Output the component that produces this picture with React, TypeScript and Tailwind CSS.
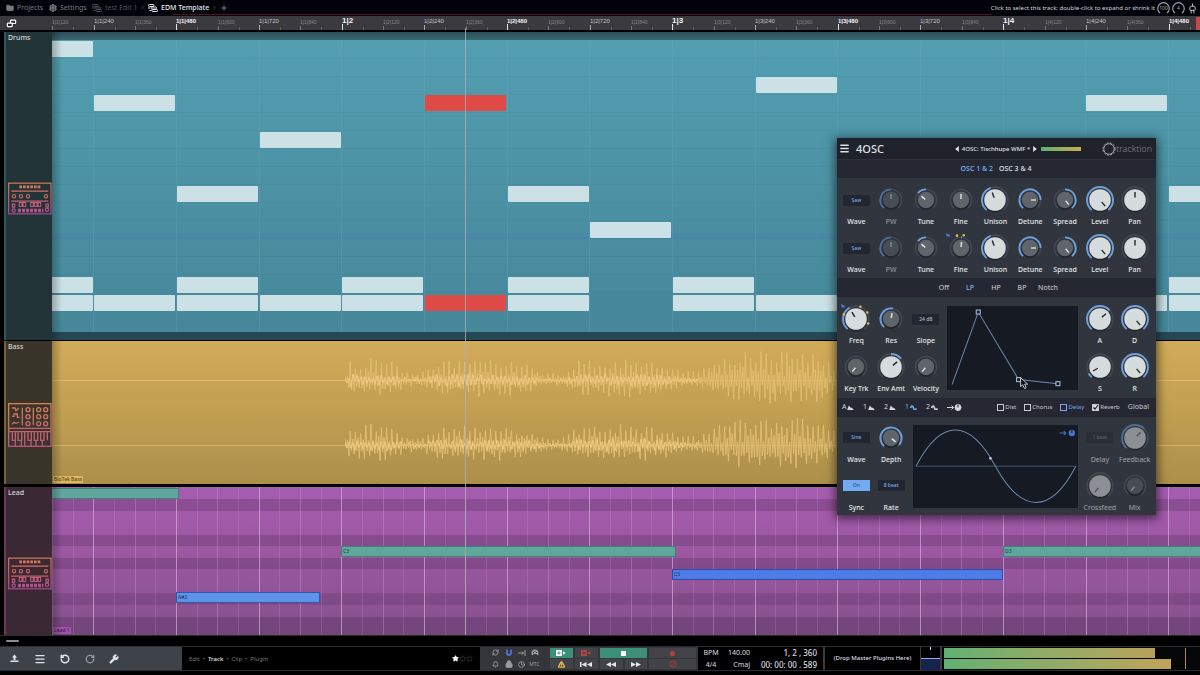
import React from "react";
import {
  Folder,
  Settings,
  Plus,
  Plug,
  Menu,
  RotateCcw,
  RotateCw,
  Wrench,
  Lock,
  Star,
  RefreshCw,
  Bell,
  Clock,
  TriangleAlert,
} from "lucide-react";

/* ------------------------------------------------------------------ */
/* Timeline geometry: the canvas starts at beat position 1|1|120        */
/* ------------------------------------------------------------------ */
const SIXTEENTH = 82.68;
const slotX = (slot: number) => Math.round(slot * SIXTEENTH - 40.4);

type DrumHit = { slot: number; lane: number; hot?: boolean };

const drumHits: DrumHit[] = [
  { slot: 0, lane: 0 },
  { slot: 1, lane: 3 },
  { slot: 3, lane: 5 },
  { slot: 5, lane: 3, hot: true },
  { slot: 9, lane: 2 },
  { slot: 13, lane: 3 },
  { slot: 2, lane: 8 },
  { slot: 6, lane: 8 },
  { slot: 14, lane: 8 },
  { slot: 7, lane: 10 },
  ...[0, 2, 4, 6, 8, 10, 12, 14].map((slot) => ({ slot, lane: 13 })),
  ...[0, 1, 2, 3, 4, 6, 8, 9, 10, 11, 12, 13, 14].map((slot) => ({ slot, lane: 14 })),
  { slot: 5, lane: 14, hot: true },
];

const leadLanes = [
  "h-3 bg-transparent",
  "h-3 bg-[#2b1a35]/20",
  "h-6 bg-transparent",
  "h-[11px] bg-[#2b1a35]/20",
  "h-3 bg-transparent",
  "h-[11px] bg-[#2b1a35]/20",
  "h-6 bg-transparent",
  "h-3 bg-[#2b1a35]/15",
  "h-3 bg-transparent",
  "flex-1 bg-[#2b1a35]/20",
];

const leadNotes = [
  { x: -2, w: 129, y: 1, name: "", tone: "bg-[#5fa69b] border-[#3f7f7c]" },
  { x: 289, w: 335, y: 59, name: "C3", tone: "bg-[#5fa69b] border-[#3f7f7c]" },
  { x: 951, w: 335, y: 59, name: "D3", tone: "bg-[#5fa69b] border-[#3f7f7c]" },
  { x: 620, w: 331, y: 82, name: "C3", tone: "bg-[#4f7be6] border-[#2f4aa8]" },
  { x: 124, w: 144, y: 105, name: "A#2", tone: "bg-[#5e93ec] border-[#3257a4]" },
];

const rulerMarks = Array.from({ length: 28 }, (_, i) => {
  const tick = (i + 1) * 120;
  const beat = Math.floor(tick / 960) + 1;
  const rest = tick % 960;
  return {
    text: rest === 0 ? `1|${beat}` : `1|${beat}|${rest}`,
    level: rest === 0 ? 3 : rest % 480 === 0 ? 2 : rest % 240 === 0 ? 1 : 0,
    x: Math.round(((i + 1) * SIXTEENTH) / 2 - 41),
  };
});

const markText = [
  "text-[5px] leading-3 text-[#85848a]",
  "text-[6px] leading-[11px] text-[#c3c3c8]",
  "text-[6px] font-bold leading-[10px] text-[#f4f4f6]",
  "text-[8px] font-bold leading-[9px] text-[#f4f4f6]",
];
const markTick = [
  "h-1 bg-[#77767c]",
  "h-[5px] bg-[#a9a9ad]",
  "h-[6px] bg-[#e4e4e6]",
  "h-[6px] bg-[#e4e4e6]",
];

function TopBar() {
  return (
    <header className="flex h-4 items-center bg-[#02020a] pl-[6px] pr-[2px] text-[7px] leading-4 text-[#777981]">
      <nav className="flex items-center">
        <a href="#projects" className="flex w-[43px] items-center gap-[3px]">
          <Folder className="size-2" fill="currentColor" /> Projects
        </a>
        <a href="#settings" className="flex w-[43px] items-center gap-[3px]">
          <Settings className="size-2" strokeWidth={4} /> Settings
        </a>
        <a href="#test-edit" className="flex w-14 items-center gap-[3px] text-[#4c4e56]">
          <TabGlyph /> test Edit 1 <span className="text-[#34353c]">×</span>
        </a>
        <a href="#edm" className="flex items-center gap-[3px] font-medium text-[#e8e9ec]">
          <TabGlyph /> EDM Template <span className="font-normal text-[#34353c]">×</span>
        </a>
        <button type="button" aria-label="New tab" className="ml-1">
          <Plus className="size-2" strokeWidth={3} />
        </button>
      </nav>
      <div className="ml-auto flex items-center gap-[2px]">
        <span className="text-[6px] leading-4 text-[#d3d4d8]">
          Click to select this track; double-click to expand or shrink it
        </span>
        <Dial text="100" />
        <Dial text="4" />
        <Plug className="size-[11px] rotate-180 text-[#c9cace]" />
      </div>
    </header>
  );
}

function TabGlyph() {
  return (
    <svg viewBox="0 0 20 16" className="h-2 w-[10px]" fill="none" stroke="currentColor" strokeWidth="2">
      <rect x="1" y="1" width="11" height="4" rx="1.500" />
      <rect x="6" y="6" width="11" height="4" rx="1.500" />
      <rect x="8" y="11" width="11" height="4" rx="1.500" />
      <path d="M0 8h4M3 13h4" />
    </svg>
  );
}

function Dial({ text }: { text: string }) {
  return (
    <span className="relative flex size-[13px] items-center justify-center text-[5px] leading-none text-[#a5a6ac]">
      <svg viewBox="0 0 26 26" className="absolute inset-0 size-full" fill="none" stroke="#9a9ba2" strokeWidth="2.4">
        <path d="M6 22A11.5 11.5 0 1 1 20 22" />
      </svg>
      {text}
    </span>
  );
}

function Ruler() {
  return (
    <div className="relative flex h-4 border-b-2 border-black bg-[#3b3a3f] pl-1">
      <div className="absolute left-[173px] right-[208px] top-[-2px] h-px bg-[#4d1718]" />
      <div className="flex w-12 flex-none items-center bg-[#38373c] pl-[2px]">
        <svg viewBox="0 0 30 26" className="h-[9px] w-[11px]" fill="none" stroke="#fff" strokeWidth="3.4">
          <rect x="12" y="3" width="15" height="10" rx="2" />
          <rect x="3" y="12" width="14" height="10" rx="2" fill="#222" />
        </svg>
      </div>
      <div className="relative flex-1 overflow-hidden font-['Liberation_Sans',sans-serif]">
        {rulerMarks.map((m) => (
          <div
            key={m.text}
            className={`absolute inset-y-0 whitespace-nowrap ${markText[m.level]}`}
            style={{ left: m.x }}
          >
            {m.text}
            <span className={`absolute bottom-0 left-0 w-px ${markTick[m.level]}`} />
            <span className="absolute bottom-0 left-[21px] h-[3px] w-px bg-[#5d5c62]" />
          </div>
        ))}
        <div className="absolute right-0 top-px h-[13px] w-1 bg-[#c64a45]" />
      </div>
    </div>
  );
}

function DrumMachineIcon({ id }: { id: string }) {
  return (
    <svg viewBox="0 0 132 98" className="block h-[33px] w-11" fill="none" stroke={`url(#${id})`} strokeWidth="3.4">
      <defs>
        <linearGradient id={id} x1="0" y1="0" x2="0" y2="98" gradientUnits="userSpaceOnUse">
          <stop offset="0" stopColor="#dc7f52" />
          <stop offset="0.45" stopColor="#cd6662" />
          <stop offset="1" stopColor="#ab4a9a" />
        </linearGradient>
      </defs>
      <rect x="2" y="3" width="127" height="92" />
      <path d="M34 14h66" strokeWidth="8" strokeDasharray="8 3" />
      <path d="M10 27h111M10 57h111" strokeWidth="4" />
      <circle cx="18" cy="42" r="5" />
      <circle cx="39" cy="42" r="5" />
      <circle cx="60" cy="42" r="5" />
      <circle cx="114" cy="42" r="5" />
      <path d="M34 61h8v12h-8zM45 61h8v12h-8zM68 61h8v12h-8zM79 61h8v12h-8zM90 61h8v12h-8z" />
      <path d="M13 66h7v9h-7zM114 66h7v9h-7z" />
      <path d="M30 85h76" strokeWidth="11" strokeDasharray="9 3" />
      <circle cx="17" cy="85" r="5" />
      <circle cx="117" cy="83" r="5" />
    </svg>
  );
}

function SynthIcon() {
  return (
    <svg viewBox="0 0 132 132" className="block size-11" fill="none" stroke="url(#synth)" strokeWidth="4">
      <defs>
        <linearGradient id="synth" x1="0" y1="0" x2="0" y2="132" gradientUnits="userSpaceOnUse">
          <stop offset="0" stopColor="#d87e58" />
          <stop offset="1" stopColor="#ba527e" />
        </linearGradient>
      </defs>
      <rect x="2" y="2" width="127" height="128" />
      <path d="M2 76h127M2 86h127" />
      <path d="M12 15h9l3 8 9-8M12 40h6v-7h10v10h7M12 64l6-6 6 3 10-4M43 14v53M76 14v53" />
      {[20, 41, 62].map((y) =>
        [60, 92, 113].map((x) => <circle key={`${x}-${y}`} cx={x} cy={y} r="6" />),
      )}
      <path d="M13 88v24h9v-24M30 88v24h11v-24M22 112v18M50 88v42M60 88v24h10v-24M79 88v24h10v-24M69 112v18M98 88v24h10v-24M84 112v18M103 112v18M118 88v24M40 112v18" />
    </svg>
  );
}

type TrackProps = {
  name: string;
  head: string;
  edge: string;
  icon: React.ReactNode;
  iconPad: string;
  children: React.ReactNode;
  grow: string;
};

function Track({ name, head, edge, icon, iconPad, children, grow }: TrackProps) {
  return (
    <section className={`flex ${grow} pl-1`}>
      <div className={`w-[2px] flex-none ${edge}`} />
      <div className={`flex w-[46px] flex-none flex-col pl-[2px] ${head}`}>
        <h2 className="h-[11px] text-[7px] font-medium leading-[11px] text-[#d3d7d9]">{name}</h2>
        <div className={iconPad}>{icon}</div>
      </div>
      <div className="relative flex-1 overflow-hidden">
        {children}
        <div className="absolute inset-y-0 left-0 w-[10px] bg-gradient-to-r from-black/25 to-transparent" />
      </div>
    </section>
  );
}

function DrumClip() {
  return (
    <div className="flex h-full flex-col bg-[#2b4c57]">
      <div className="h-2 bg-gradient-to-b from-[#2c4e58] to-[#3a6872]" />
      <div className="relative h-[292px] bg-gradient-to-b from-[#539eb1] via-[#4c92a4] to-[#46879a]">
        <div className="absolute inset-x-0 top-[192px] h-[10px] bg-gradient-to-b from-transparent via-[#4a83ab]/70 to-transparent" />
        {Array.from({ length: 14 }, (_, i) => (
          <div
            key={`lane-${i}`}
            className="absolute inset-x-0 h-px bg-[#2f6b80]/10"
            style={{ top: 18 + i * 18 }}
          />
        ))}
        {Array.from({ length: 14 }, (_, i) => (
          <div
            key={`bar-${i}`}
            className="absolute inset-y-0 w-px bg-[#7fc0cf]/15"
            style={{ left: slotX(i + 1) - 1 }}
          />
        ))}
        {drumHits.map((n) => (
          <div
            key={`${n.slot}-${n.lane}`}
            className={
              n.hot
                ? "absolute h-4 w-[81px] rounded-[1px] bg-[#df4c48]"
                : "absolute h-4 w-[81px] rounded-[1px] bg-[#cbe1e6]"
            }
            style={{ left: slotX(n.slot), top: Math.round(1 + n.lane * 18.12) }}
          />
        ))}
      </div>
      <div className="h-2 bg-[#254854]" />
    </div>
  );
}

/* Repeatable noise so the wave keeps one shape between renders. */
function noise(n: number) {
  const v = Math.sin(n * 127.1 + 11.7) * 43758.5453;
  return v - Math.floor(v);
}

const envelope: [number, number][] = [
  [0, 6],
  [4, 24],
  [12, 15],
  [25, 20],
  [45, 18],
  [60, 9],
  [75, 8],
  [95, 18],
  [125, 19],
  [165, 17],
  [185, 14],
  [200, 6],
  [218, 7],
  [235, 18],
  [280, 19],
  [310, 17],
  [335, 9],
  [354, 8],
  [375, 21],
  [400, 26],
  [440, 27],
  [470, 25],
  [491, 12],
];

function envAt(x: number) {
  for (let i = 1; i < envelope.length; i++) {
    const [x1, y1] = envelope[i];
    const [x0, y0] = envelope[i - 1];
    if (x <= x1) return y0 + ((y1 - y0) * (x - x0)) / (x1 - x0);
  }
  return 12;
}

function spikes(seed: number, mid: number) {
  let d = "";
  let i = 0;
  for (let x = 0; x < 491; x += 2.6) {
    const e = envAt(x);
    const main = i % 2 === 0;
    const up = e * (main ? 0.6 + 0.5 * noise(i + seed) : 0.1 + 0.4 * noise(i + seed));
    const down = e * (main ? 0.2 + 0.3 * noise(i + seed + 50) : 0.4 + 0.5 * noise(i + seed + 90));
    d += `${i === 0 ? "M" : "L"}${x.toFixed(1)} ${(mid - up).toFixed(1)}L${(x + 1.3).toFixed(1)} ${(mid + down).toFixed(1)}`;
    i++;
  }
  return d;
}

function body(seed: number, mid: number) {
  let d = "";
  for (let i = 0; i < 178; i++) {
    const x = i * 2;
    const e = envAt(x) * 0.3 * (0.2 + noise(i * 3 + seed));
    d += `${i === 0 ? "M" : "L"}${x} ${(mid + (i % 2 ? e : -e)).toFixed(1)}`;
  }
  return d;
}

function BassClip() {
  return (
    <div className="relative h-full bg-gradient-to-b from-[#d2ab58] via-[#c19f52] to-[#ac8f4b]">
      <div className="absolute inset-x-0 top-[39px] h-px bg-[#dcbb70]" />
      <div className="absolute inset-x-0 top-[104px] h-px bg-[#d3b269]" />
      <svg viewBox="0 0 491 143" className="absolute left-[293px] top-0 h-[143px] w-[491px]" fill="none">
        {[39, 104].map((mid) => (
          <g key={mid} strokeLinejoin="bevel">
            <path d={spikes(mid, mid)} stroke="#e2be72" strokeWidth="0.9" />
            <path d={body(mid, mid)} stroke="#efcb86" strokeWidth="0.9" />
          </g>
        ))}
      </svg>
      <span className="absolute bottom-px left-px bg-[#dbb65f] px-px text-[5px] font-medium leading-[7px] text-[#5c4720]">
        BioTek Bass
      </span>
    </div>
  );
}

function LeadClip() {
  return (
    <div className="relative flex h-full flex-col bg-gradient-to-b from-[#a65db0] via-[#9a579f] to-[#85508d]">
      {leadLanes.map((c, i) => (
        <div key={i} className={c} />
      ))}
      {Array.from({ length: 56 }, (_, i) => (
        <div
          key={i}
          className={
            (i + 2) % 4 === 0
              ? "absolute inset-y-0 w-px bg-[#e3b9e8]/60"
              : (i + 2) % 2 === 0
                ? "absolute inset-y-0 w-px bg-[#d49fdb]/35"
                : "absolute inset-y-0 w-px bg-[#d49fdb]/20"
          }
          style={{ left: Math.round((i * SIXTEENTH) / 4) }}
        />
      ))}
      {leadNotes.map((n) => (
        <div
          key={n.x}
          className={`absolute h-[11px] border pl-px text-[5px] leading-[9px] text-[#16324a] ${n.tone}`}
          style={{ left: n.x, top: n.y, width: n.w }}
        >
          {n.name}
        </div>
      ))}
      <span className="absolute bottom-px left-px bg-[#a154aa] px-px text-[5px] font-medium leading-[7px] text-[#3e1c46]">
        Lead 1
      </span>
    </div>
  );
}

/* ------------------------------------------------------------------ */
/* Plugin window                                                        */
/* ------------------------------------------------------------------ */
function polar(r: number, deg: number) {
  const a = ((deg - 90) * Math.PI) / 180;
  return `${(15 + r * Math.cos(a)).toFixed(2)} ${(15 + r * Math.sin(a)).toFixed(2)}`;
}

function arc(r: number, from: number, to: number) {
  return `M${polar(r, from)}A${r} ${r} 0 ${Math.abs(to - from) > 180 ? 1 : 0} ${to > from ? 1 : 0} ${polar(r, to)}`;
}

type KnobProps = {
  label: string;
  angle: number;
  kind?: "white" | "grey" | "dim" | "dimwhite";
  from?: number;
  ring?: boolean;
  needle?: string;
  mod?: boolean;
  dots?: number[];
};

const faces = { white: "#d6dbdd", grey: "#60646b", dim: "#484c54", dimwhite: "#8c9094" };
const needles = { white: "#20252b", grey: "#e4e6e8", dim: "#8a8d92", dimwhite: "#4f5357" };

function Knob({ label, angle, kind = "grey", from = -140, ring = true, needle, mod, dots = [] }: KnobProps) {
  const big = kind === "white" || kind === "dimwhite";
  const faded = kind === "dim" || kind === "dimwhite";
  const r = big ? 13 : 10.6;
  const tip = big ? 8 : 6;
  return (
    <label
      className={
        faded
          ? "relative flex flex-col items-center gap-px text-[7px] leading-3 text-[#a0a3a9]"
          : "relative flex flex-col items-center gap-px text-[7px] font-medium leading-3 text-[#e6e8eb]"
      }
    >
      <svg viewBox="0 0 30 30" className="size-[30px] overflow-visible" fill="none">
        <path d={arc(r, -140, 140)} stroke="#454b56" strokeWidth="1.3" />
        {ring && angle !== from && (
          <path d={arc(r, from, angle)} stroke={faded ? "#4d6d96" : "#6f9fdc"} strokeWidth="1.9" />
        )}
        <circle cx="15" cy="16.5" r={big ? 10.8 : 8.6} fill="#22252c" />
        <circle cx="15" cy="15" r={big ? 10.8 : 8.2} fill={faces[kind]} />
        <path
          d={`M${polar(big ? 2.5 : 1, angle)}L${polar(tip, angle)}`}
          stroke={needle ?? needles[kind]}
          strokeWidth="1.4"
        />
        {dots.map((a) => {
          const [x, y] = polar(13, a).split(" ");
          return <circle key={a} cx={x} cy={y} r="1.3" fill="#e8b64c" />;
        })}
        {mod && <path d="M0 0l3.500 1.500 1 2h-4z" fill="#4c6fd0" />}
      </svg>
      <span className="whitespace-nowrap">{label}</span>
      <input
        type="range"
        min={-140}
        max={140}
        defaultValue={angle}
        className="absolute inset-x-0 top-0 m-0 h-[30px] w-full cursor-pointer opacity-0"
      />
    </label>
  );
}

type ChoiceProps = { label: string; value: string; look?: "blue" | "grey" | "on" | "dim" };

function Choice({ label, value, look = "blue" }: ChoiceProps) {
  const tone = {
    blue: "bg-[#222630] text-[#7ea8e6]",
    grey: "bg-[#222630] text-[#b9bdc4]",
    on: "bg-[#74aaf2] text-[#2d5791]",
    dim: "bg-[#2a2e36] text-[#62666e]",
  }[look];
  return (
    <label
      className={
        look === "dim"
          ? "flex flex-col items-center gap-px text-[7px] leading-3 text-[#a0a3a9]"
          : "flex flex-col items-center gap-px text-[7px] font-medium leading-3 text-[#e6e8eb]"
      }
    >
      <span className="flex h-[30px] items-center">
        <select
          defaultValue={value}
          className={`h-[11px] w-[27px] appearance-none text-center text-[5px] leading-[11px] ${tone}`}
        >
          <option>{value}</option>
        </select>
      </span>
      {label}
    </label>
  );
}

function OscRow({ second }: { second?: boolean }) {
  return (
    <>
      <Choice label="Wave" value="Saw" />
      <Knob label="PW" angle={0} kind="dim" />
      <Knob label="Tune" angle={-50} from={0} />
      <Knob label="Fine" angle={second ? 5 : 0} from={0} mod={second} dots={second ? [-18, 12] : []} />
      <Knob label="Unison" angle={-20} kind="white" />
      <Knob label="Detune" angle={90} needle="#dfe3b0" />
      <Knob label="Spread" angle={140} from={0} />
      <Knob label="Level" angle={140} kind="white" />
      <Knob label="Pan" angle={0} from={0} kind="white" />
    </>
  );
}

function TracktionLogo() {
  return (
    <div className="flex items-center text-[9px] leading-3 text-[#858990]">
      <svg viewBox="0 0 40 40" className="size-[14px]" fill="none" stroke="#b9bcc1">
        <circle cx="20" cy="20" r="15" strokeWidth="2.4" />
        <circle cx="20" cy="20" r="17.500" strokeWidth="2.6" strokeDasharray="5 4.200" />
      </svg>
      <span className="font-light">tracktion</span>
    </div>
  );
}

function ModTab({ text, shape, active }: { text: string; shape: "env" | "lfo"; active?: boolean }) {
  return (
    <button
      type="button"
      className={active ? "flex w-[21px] items-center gap-px text-[#78a6ea]" : "flex w-[21px] items-center gap-px"}
    >
      {text}
      <svg viewBox="0 0 16 12" className="h-[5px] w-[7px]" fill="none">
        {shape === "env" ? (
          <path d="M0 12L4 1l4 5 4 1 4 5z" fill="currentColor" />
        ) : (
          <path d="M1 7c2-6 5-6 7 0s5 5 7 1" stroke="currentColor" strokeWidth="4" />
        )}
      </svg>
    </button>
  );
}

function FxToggle({ label, on, active }: { label: string; on?: boolean; active?: boolean }) {
  return (
    <label className={active ? "flex items-center gap-px text-[#78a6ea]" : "flex items-center gap-px"}>
      <span className="relative size-[7px]">
        <input
          type="checkbox"
          defaultChecked={on}
          className="block size-[7px] appearance-none border border-current checked:bg-[#d5d8dc]"
        />
        {on && (
          <svg viewBox="0 0 14 14" className="absolute inset-0 size-[7px]" fill="none" stroke="#20232b" strokeWidth="2.4">
            <path d="M3 7l3 3 6-8" />
          </svg>
        )}
      </span>
      {label}
    </label>
  );
}

function PluginWindow() {
  return (
    <aside className="absolute right-11 top-[138px] w-[319px] bg-[#31363e] text-[#dfe1e5] shadow-[0_2px_9px_2px_rgba(0,0,0,0.55)]">
      <div className="flex h-[21px] items-center bg-[#20222b] pl-[2px] pr-1">
        <button type="button" aria-label="Menu">
          <Menu className="size-[11px]" strokeWidth={3} />
        </button>
        <h1 className="ml-[6px] w-[99px] text-[11px] font-medium leading-4">4OSC</h1>
        <div className="flex w-[82px] items-center justify-between text-[6px] font-medium leading-3">
          <svg viewBox="0 0 6 10" className="h-[6px] w-1" fill="currentColor"><path d="M6 0v10L0 5z" /></svg>
          <button type="button">4OSC: Tischhupe WMF *</button>
          <svg viewBox="0 0 6 10" className="h-[6px] w-1" fill="currentColor"><path d="M0 0v10l6-5z" /></svg>
        </div>
        <div className="ml-1 h-1 w-10 bg-gradient-to-r from-[#58b070] to-[#c2ad4f]" />
        <div className="ml-auto">
          <TracktionLogo />
        </div>
      </div>

      <div className="flex h-[19px] items-center justify-center gap-[6px] border-t border-[#2c303a] bg-[#252832] pr-px text-[7px] font-medium">
        <button type="button" className="text-[#7fb0f5]">OSC 1 &amp; 2</button>
        <button type="button">OSC 3 &amp; 4</button>
      </div>

      <div className="grid grid-cols-9 gap-y-[5px] pb-[2px] pl-[2px] pr-1 pt-[7px]">
        <OscRow />
        <OscRow second />
      </div>

      <div className="flex h-[19px] items-center justify-center bg-[#252832] pr-px pt-px text-[7px] text-[#d3d6da]">
        <button type="button" className="w-[26px]">Off</button>
        <button type="button" className="w-[26px] font-medium text-[#7fb0f5]">LP</button>
        <button type="button" className="w-[26px]">HP</button>
        <button type="button" className="w-[26px]">BP</button>
        <button type="button" className="w-[26px]">Notch</button>
      </div>

      <div className="grid grid-cols-9 gap-y-[5px] pb-[2px] pl-[2px] pr-1 pt-[7px]">
        <Knob label="Freq" angle={-30} kind="white" mod dots={[-70, 20, 60, 110]} />
        <Knob label="Res" angle={10} />
        <Choice label="Slope" value="24 dB" look="grey" />
        <div className="col-span-4 row-span-2 mx-1 mb-[6px] mt-[2px] bg-[#161b23]">
          <svg viewBox="0 0 130 83" className="block size-full overflow-visible" fill="none">
            <path d="M5 78L31 6L71 73L110 77" stroke="#6c87ad" />
            <g stroke="#a8c4ea" fill="#161b23">
              <rect x="29" y="4" width="4" height="4" />
              <rect x="69" y="71" width="4" height="4" />
              <rect x="108" y="75" width="4" height="4" />
            </g>
            <path d="M73 71v9l2-2 2 4 1.500-1-1.500-3.500h3z" fill="#12151b" stroke="#e8eaee" strokeWidth="0.8" />
          </svg>
        </div>
        <Knob label="A" angle={48} kind="white" />
        <Knob label="D" angle={140} kind="white" />
        <Knob label="Key Trk" angle={-140} ring={false} />
        <Knob label="Env Amt" angle={50} from={0} kind="white" />
        <Knob label="Velocity" angle={-140} ring={false} />
        <Knob label="S" angle={-120} kind="white" />
        <Knob label="R" angle={140} kind="white" />
      </div>

      <div className="flex h-[19px] items-center bg-[#252832] pl-[5px] pr-[7px] text-[7px] text-[#d3d6da]">
        <ModTab text="A" shape="env" />
        <ModTab text="1" shape="env" />
        <ModTab text="2" shape="env" />
        <ModTab text="1" shape="lfo" active />
        <ModTab text="2" shape="lfo" />
        <svg viewBox="0 0 30 14" className="h-[7px] w-[15px]" fill="none" stroke="currentColor" strokeWidth="2">
          <path d="M0 7h13M9 3l4 4-4 4" />
          <circle cx="22" cy="7" r="6" fill="currentColor" />
          <path d="M22 7V1" stroke="#252832" />
        </svg>
        <div className="ml-auto flex items-center gap-2 text-[6px] text-[#c8cbd0]">
          <FxToggle label="Dist" />
          <FxToggle label="Chorus" />
          <FxToggle label="Delay" active />
          <FxToggle label="Reverb" on />
          <button type="button" className="text-[7px]">Global</button>
        </div>
      </div>

      <div className="grid grid-cols-9 gap-y-[5px] pb-px pl-[2px] pr-1 pt-[6px]">
        <Choice label="Wave" value="Sine" />
        <Knob label="Depth" angle={130} />
        <div className="col-span-5 row-span-2 mx-1 mb-[6px] mt-[2px] bg-[#161b23]">
          <svg viewBox="0 0 165 83" className="block size-full" fill="none">
            <path d="M3 41H162" stroke="#3f536d" />
            <path d="M3 41C28 -7 56 -7 82 41S137 89 162 41" stroke="#6c87ad" />
            <circle cx="77" cy="33" r="1.200" fill="#c5dcf8" />
            <path d="M146 8h6M150 6l2 2-2 2" stroke="#4c6fd0" />
            <circle cx="158" cy="8" r="3.200" fill="#4c6fd0" />
            <path d="M158 8V5" stroke="#161b23" />
          </svg>
        </div>
        <Choice label="Delay" value="1 beat" look="dim" />
        <Knob label="Feedback" angle={45} kind="dimwhite" />
        <Choice label="Sync" value="On" look="on" />
        <Choice label="Rate" value="8 beat" />
        <Knob label="Crossfeed" angle={-140} kind="dimwhite" ring={false} />
        <Knob label="Mix" angle={-140} kind="dim" ring={false} />
      </div>
    </aside>
  );
}

/* ------------------------------------------------------------------ */
/* Transport                                                            */
/* ------------------------------------------------------------------ */
function Transport() {
  const cell = "flex items-center justify-center";
  return (
    <footer className="mb-1 flex h-[25px] border-y border-[#2b2b30] bg-black text-[#c4c6ca]">
      <div className="flex w-[182px] flex-none items-center gap-[14px] bg-[#3e434a] pl-[9px] text-[#e4e6e9]">
        <button type="button" aria-label="Export">
          <svg viewBox="0 0 22 22" className="size-[11px]" fill="currentColor"><path d="M11 3l5 6h-3v5h-4V9H6zM3 15h16v3H3z" /></svg>
        </button>
        <button type="button" aria-label="Menu"><Menu className="size-3" strokeWidth={2.5} /></button>
        <button type="button" aria-label="Undo"><RotateCcw className="size-[10px]" strokeWidth={3.5} /></button>
        <button type="button" aria-label="Redo" className="pl-px text-[#9a9da2]"><RotateCw className="size-[10px]" strokeWidth={3} /></button>
        <button type="button" aria-label="Tools"><Wrench className="size-[10px]" fill="currentColor" strokeWidth={2} /></button>
      </div>
      <div className="flex flex-1 items-center px-[7px] text-[6px] leading-3 text-[#77797f]">
        <nav className="flex gap-[3px]">
          <a href="#edit">Edit</a><span>•</span>
          <a href="#track" className="font-medium text-[#e9eaec]">Track</a><span>•</span>
          <a href="#clip">Clip</a><span>•</span>
          <a href="#plugin">Plugin</a>
        </nav>
        <div className="ml-auto flex">
          <Star className="size-[7px] text-white" fill="currentColor" />
          <Star className="size-[7px] text-[#44464b]" />
          <Star className="size-[7px] text-[#44464b]" />
        </div>
      </div>
      <div className="flex w-[218px] flex-none bg-[#35363b] pl-[9px] pr-[2px]">
        <div className="grid w-[52px] grid-cols-4 grid-rows-2 place-items-center text-[#9b9da2]">
          <RefreshCw className="size-[7px]" strokeWidth={3} />
          <svg viewBox="0 0 16 16" className="size-2" fill="none" stroke="#5273e0" strokeWidth="3.6">
            <path d="M4 1v7a4 4 0 0 0 8 0V1" />
          </svg>
          <svg viewBox="0 0 16 16" className="size-2" fill="none" stroke="currentColor" strokeWidth="2">
            <path d="M0 8h11M14 2v12M8 5l3 3-3 3" />
          </svg>
          <svg viewBox="0 0 16 16" className="size-2" fill="currentColor">
            <path fillRule="evenodd" d="M8 1a7 7 0 0 1 7 7c0 3-1 4-2 5l-2-3H5l-2 3C2 12 1 11 1 8a7 7 0 0 1 7-7zM4 6v2h2V6zM7 4v2h2V4zM10 6v2h2V6z" />
          </svg>
          <Bell className="size-[7px]" strokeWidth={3} />
          <Lock className="size-2" strokeWidth={3} fill="currentColor" />
          <Clock className="size-[7px]" strokeWidth={3} />
          <span className="text-[5px] leading-none">MTC</span>
        </div>
        <div className="ml-[9px] grid flex-1 grid-cols-[23fr_23fr_23fr_23fr_47fr] grid-rows-2 gap-x-[2px] gap-y-px py-px">
          <button type="button" aria-label="Insert" className={`${cell} bg-[#3c8f78] text-white`}>
            <svg viewBox="0 0 24 14" className="h-[6px] w-[10px]" fill="currentColor"><path fillRule="evenodd" d="M0 0h14v14H0zM6 3v3H3v2h3v3h2V8h3V6H8V3zM17 3l6 4-6 4z" /></svg>
          </button>
          <button type="button" aria-label="Punch" className={`${cell} bg-[#424348] text-[#b8443f]`}>
            <svg viewBox="0 0 24 14" className="h-[6px] w-[10px]" fill="currentColor"><path fillRule="evenodd" d="M0 0h14v14H0zM6 3v3H3v2h3v3h2V8h3V6H8V3z" /><circle cx="20" cy="7" r="3" /></svg>
          </button>
          <button type="button" aria-label="Stop" className={`${cell} col-span-2 bg-[#3c8f78]`}>
            <span className="size-[5px] bg-white" />
          </button>
          <button type="button" aria-label="Record" className={`${cell} bg-[#424348]`}>
            <span className="size-[5px] rounded-full bg-[#c23b3b]" />
          </button>
          <button type="button" aria-label="Panic" className={`${cell} bg-[#424348] text-[#e2b64c]`}>
            <TriangleAlert className="size-[7px]" strokeWidth={5} />
          </button>
          <button type="button" aria-label="To start" className={`${cell} bg-[#424348] text-[#e4e6e9]`}>
            <svg viewBox="0 0 24 10" className="h-[5px] w-3" fill="currentColor"><path d="M0 0h3v10H0zM13 0v10L3 5zM24 0v10L14 5z" /></svg>
          </button>
          <button type="button" aria-label="Rewind" className={`${cell} bg-[#424348] text-[#e4e6e9]`}>
            <svg viewBox="0 0 20 10" className="h-[5px] w-[10px]" fill="currentColor"><path d="M10 0v10L0 5zM20 0v10L10 5z" /></svg>
          </button>
          <button type="button" aria-label="Forward" className={`${cell} bg-[#424348] text-[#e4e6e9]`}>
            <svg viewBox="0 0 20 10" className="h-[5px] w-[10px]" fill="currentColor"><path d="M0 0v10l10-5zM10 0v10l10-5z" /></svg>
          </button>
          <button type="button" aria-label="Loop record" className={`${cell} bg-[#424348]`}>
            <svg viewBox="0 0 16 16" className="size-2" fill="none" stroke="#a93838" strokeWidth="2">
              <circle cx="8" cy="8" r="6" />
              <path d="M5 11l6-6" />
            </svg>
          </button>
        </div>
      </div>
      <div className="grid w-[127px] flex-none grid-cols-[22px_28px_1fr] items-center border-r-2 border-[#3a3a40] pl-[2px] pr-[6px] text-[7px] leading-[11px] text-[#dcdde0]">
        <span className="text-center">BPM</span>
        <span className="text-right">140.00</span>
        <span className="text-right text-[8px] font-medium">1, 2 , 360</span>
        <span className="text-center">4/4</span>
        <span className="text-right">Cmaj</span>
        <span className="text-right text-[8px] font-medium">00: 00: 00 . 589</span>
      </div>
      <div className="flex w-[96px] flex-none items-center justify-center border-r border-[#3a3a40] text-[6px] font-medium text-[#dcdde0]">
        (Drop Master Plugins Here)
      </div>
      <div className="flex w-[21px] flex-none flex-col items-center justify-end border-r-2 border-[#3a3a40]">
        <span className="mb-auto h-[3px] w-px bg-[#cfd0d4]" />
        <span className="h-3 w-full border-t border-[#8fb0ea] bg-[#16234d]" />
      </div>
      <div className="relative flex w-[258px] flex-none flex-col gap-px bg-[#060709] py-px pl-[2px]">
        <div className="h-[11px] w-[211px] bg-gradient-to-r from-[#60b172] via-[#93ab66] to-[#b9a25a]" />
        <div className="h-[11px] w-[227px] bg-gradient-to-r from-[#60b172] via-[#93ab66] to-[#c0a458]" />
        <div className="absolute inset-y-px left-[243px] w-px bg-[#b98a3c]" />
      </div>
    </footer>
  );
}

export default function App() {
  return (
    <div className="relative flex min-h-screen w-full flex-col overflow-hidden bg-black font-['Noto_Sans',sans-serif]">
      <TopBar />
      <Ruler />
      <main className="relative flex flex-1 flex-col gap-px">
        <Track
          name="Drums"
          head="bg-[#233438]"
          edge="bg-[#2c5561]"
          icon={<DrumMachineIcon id="drums" />}
          iconPad="pt-[139px]"
          grow="h-[308px]"
        >
          <DrumClip />
        </Track>
        <Track
          name="Bass"
          head="bg-[#3a352b]"
          edge="bg-[#746136]"
          icon={<SynthIcon />}
          iconPad="pt-[51px]"
          grow="h-[143px]"
        >
          <BassClip />
        </Track>
        <div className="h-px" />
        <Track
          name="Lead"
          head="bg-[#3a2934]"
          edge="bg-[#6b3850]"
          icon={<DrumMachineIcon id="lead" />}
          iconPad="pt-[59px]"
          grow="flex-1"
        >
          <LeadClip />
        </Track>
        <div className="absolute -top-1 bottom-0 left-[465px] w-px bg-[#a9b0b0]/80" />
      </main>
      <div className="flex h-[11px] items-center border-t border-[#24302a] bg-black pl-[6px]">
        <div className="h-[2px] w-[13px] rounded-full bg-[#8c8c90]" />
      </div>
      <Transport />
      <PluginWindow />
    </div>
  );
}
